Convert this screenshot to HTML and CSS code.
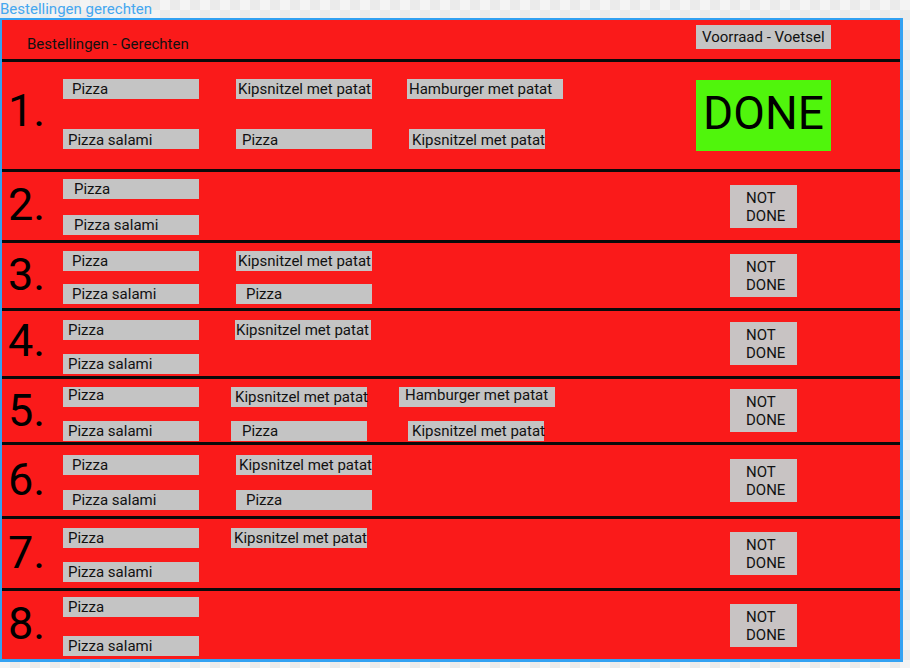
FILE: index.html
```html
<!DOCTYPE html>
<html lang="nl">
<head>
<meta charset="utf-8">
<title>Bestellingen gerechten</title>
<link rel="stylesheet" href="styles.css">
</head>
<body>
<div class="frame-label">Bestellingen gerechten</div>
<main class="frame">
  <header class="topbar">
    <div class="topbar__title">Bestellingen - Gerechten</div>
    <div class="topbar__button">Voorraad - Voetsel</div>
  </header>

  <section class="order order--1">
    <div class="order__num">1.</div>
    <div class="dishes">
      <div class="dish pad-9">Pizza</div>
      <div class="dish dish--low pad-5">Pizza salami</div>
      <div class="dish pad-2">Kipsnitzel met patat</div>
      <div class="dish dish--low pad-6">Pizza</div>
      <div class="dish dish--wide pad-2 nudge-l2">Hamburger met patat</div>
      <div class="dish dish--low pad-3">Kipsnitzel met patat</div>
    </div>
    <div class="order__status"><div class="status-done">DONE</div></div>
  </section>

  <section class="order order--2">
    <div class="order__num">2.</div>
    <div class="dishes">
      <div class="dish pad-11">Pizza</div>
      <div class="dish pad-11">Pizza salami</div>
    </div>
    <div class="order__status"><div class="status-pending">NOT<br>DONE</div></div>
  </section>

  <section class="order order--3">
    <div class="order__num">3.</div>
    <div class="dishes">
      <div class="dish pad-9">Pizza</div>
      <div class="dish pad-9">Pizza salami</div>
      <div class="dish pad-2">Kipsnitzel met patat</div>
      <div class="dish pad-10">Pizza</div>
    </div>
    <div class="order__status"><div class="status-pending">NOT<br>DONE</div></div>
  </section>

  <section class="order order--4">
    <div class="order__num">4.</div>
    <div class="dishes">
      <div class="dish pad-5">Pizza</div>
      <div class="dish pad-5">Pizza salami</div>
      <div class="dish pad-1 nudge-l1">Kipsnitzel met patat</div>
    </div>
    <div class="order__status"><div class="status-pending">NOT<br>DONE</div></div>
  </section>

  <section class="order order--5">
    <div class="order__num">5.</div>
    <div class="dishes dishes--tight">
      <div class="dish dish--top pad-5">Pizza</div>
      <div class="dish pad-5">Pizza salami</div>
      <div class="dish pad-4">Kipsnitzel met patat</div>
      <div class="dish pad-11">Pizza</div>
      <div class="dish dish--wide dish--top pad-6">Hamburger met patat</div>
      <div class="dish pad-4 nudge-r9">Kipsnitzel met patat</div>
    </div>
    <div class="order__status"><div class="status-pending">NOT<br>DONE</div></div>
  </section>

  <section class="order order--6">
    <div class="order__num">6.</div>
    <div class="dishes">
      <div class="dish pad-9">Pizza</div>
      <div class="dish pad-9">Pizza salami</div>
      <div class="dish pad-3">Kipsnitzel met patat</div>
      <div class="dish pad-10">Pizza</div>
    </div>
    <div class="order__status"><div class="status-pending">NOT<br>DONE</div></div>
  </section>

  <section class="order order--7">
    <div class="order__num">7.</div>
    <div class="dishes dishes--tight">
      <div class="dish pad-5">Pizza</div>
      <div class="dish pad-5">Pizza salami</div>
      <div class="dish pad-3">Kipsnitzel met patat</div>
    </div>
    <div class="order__status"><div class="status-pending">NOT<br>DONE</div></div>
  </section>

  <section class="order order--8">
    <div class="order__num">8.</div>
    <div class="dishes">
      <div class="dish pad-5">Pizza</div>
      <div class="dish pad-5">Pizza salami</div>
    </div>
    <div class="order__status"><div class="status-pending">NOT<br>DONE</div></div>
  </section>
</main>
</body>
</html>
```
FILE: styles.css
```css
html, body {
  margin: 0;
  padding: 0;
}

body {
  width: 910px;
  height: 668px;
  overflow: hidden;
  font-family: Roboto, "Liberation Sans", sans-serif;
  color: #111;
  background: repeating-conic-gradient(#ebebeb 0 25%, #f4f4f4 0 50%) 0 0 / 20px 20px;
}

.frame-label {
  height: 18px;
  box-sizing: border-box;
  padding-top: 1px;
  font-size: 15px;
  line-height: 17px;
  color: #45a7ef;
  white-space: nowrap;
}

.frame {
  width: 903px;
  box-sizing: border-box;
  border: 2px solid #33a2f2;
  border-right-width: 3px;
  border-bottom-width: 3px;
  background: #fa1a1a;
  display: grid;
  grid-template-rows: 39px 110px 71px 68px 68px 66px 74px 72px 71px;
}

/* header bar */
.topbar {
  display: flex;
  align-items: flex-start;
}

.topbar__title {
  margin: 15px 0 0 25px;
  font-size: 15px;
  line-height: 18px;
  white-space: nowrap;
}

.topbar__button {
  margin: 5px 69px 0 auto;
  width: 135px;
  height: 24px;
  box-sizing: border-box;
  padding-left: 6px;
  background: #c4c4c4;
  font-size: 15px;
  line-height: 24px;
  white-space: nowrap;
}

/* order rows */
.order {
  display: grid;
  grid-template-columns: 61px 633px 135px 1fr;
  border-top: 3px solid #0a0a0a;
  box-sizing: border-box;
  min-height: 0;
}

.order__num {
  align-self: center;
  padding-left: 6px;
  margin-bottom: 3px;
  font-size: 45px;
  line-height: 45px;
  color: #000;
}

.dishes {
  align-self: start;
  display: grid;
  grid-template-rows: 20px 20px;
  grid-auto-flow: column;
  grid-auto-columns: max-content;
  column-gap: 37px;
  justify-content: start;
}

.dishes--tight {
  column-gap: 32px;
}

.dish {
  width: 136px;
  height: 20px;
  box-sizing: border-box;
  background: #c4c4c4;
  font-size: 15px;
  line-height: 20px;
  white-space: nowrap;
  color: #111;
}

.dish--wide { width: 156px; }
.dish--top { line-height: 16px; }
.dish--low { line-height: 23px; }

.pad-1 { padding-left: 1px; }
.pad-2 { padding-left: 2px; }
.pad-3 { padding-left: 3px; }
.pad-4 { padding-left: 4px; }
.pad-5 { padding-left: 5px; }
.pad-6 { padding-left: 6px; }
.pad-9 { padding-left: 9px; }
.pad-10 { padding-left: 10px; }
.pad-11 { padding-left: 11px; }

.nudge-l1 { margin-left: -1px; }
.nudge-l2 { margin-left: -2px; }
.nudge-r9 { margin-left: 9px; }

.order__status {
  align-self: center;
  justify-self: center;
}

.status-pending {
  width: 67px;
  height: 43px;
  box-sizing: border-box;
  padding: 4px 0 0 16px;
  background: #c8c3c3;
  font-size: 15px;
  line-height: 18px;
  color: #111;
}

.status-done {
  width: 135px;
  height: 71px;
  box-sizing: border-box;
  padding-bottom: 5px;
  background: #50f50c;
  display: flex;
  align-items: center;
  justify-content: center;
  font-size: 46px;
  line-height: 1;
  color: #000;
}

/* per-row vertical placement */
.order--1 .dishes { padding-top: 17px; row-gap: 30px; }
.order--1 .order__num { margin-bottom: 10px; }
.order--2 .dishes { padding-top: 7px; row-gap: 16px; }
.order--3 .dishes { padding-top: 8px; row-gap: 13px; }
.order--4 .dishes { padding-top: 9px; row-gap: 14px; }
.order--4 .order__num { margin-bottom: 6px; }
.order--5 .dishes { padding-top: 8px; row-gap: 14px; }
.order--5 .order__num { margin-bottom: 0; }
.order--6 .dishes { padding-top: 10px; row-gap: 15px; }
.order--7 .dishes { padding-top: 9px; row-gap: 14px; }
.order--8 .dishes { padding-top: 6px; row-gap: 19px; }
```
